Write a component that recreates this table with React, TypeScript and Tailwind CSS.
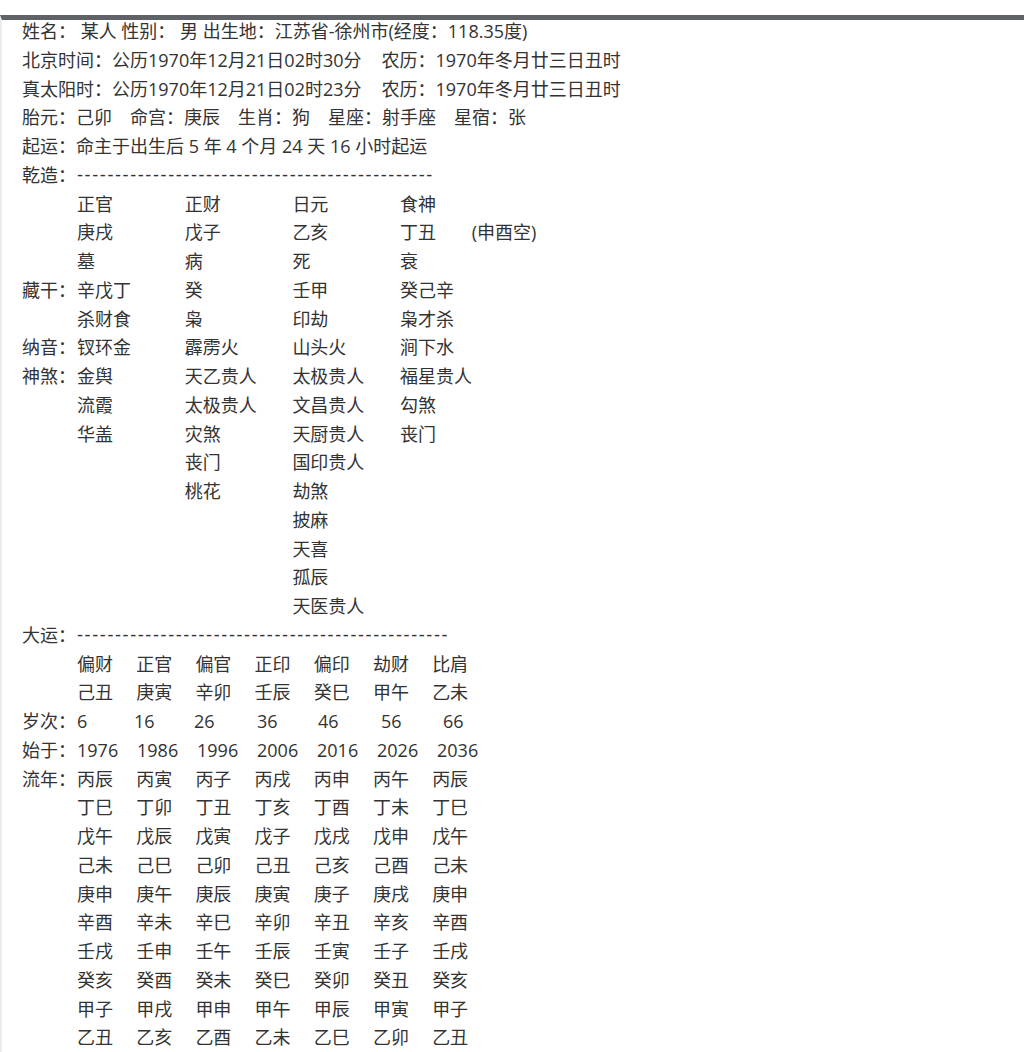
import React from "react";

const FONT = '"Open Sans", "Noto Sans CJK SC", sans-serif';

function Row({ label, children }: { label?: string; children?: React.ReactNode }) {
  return (
    <div className="flex h-[28.75px] items-center whitespace-nowrap">
      <div className="w-[55px] shrink-0">{label}</div>
      <div className="flex items-center">{children}</div>
    </div>
  );
}

function Cols({ items, w }: { items: string[]; w: string }) {
  return (
    <>
      {items.map((t, i) => (
        <div key={i} className={w}>
          {t}
        </div>
      ))}
    </>
  );
}

const Dashes = ({ n }: { n: number }) => (
  <span className="tracking-[1.6px]" style={{ fontFamily: '"Liberation Sans", sans-serif' }}>
    {"-".repeat(n)}
  </span>
);

export default function App() {
  const bazi: string[][] = [
    ["", "正官", "正财", "日元", "食神"],
    ["", "庚戌", "戊子", "乙亥", "丁丑"],
    ["", "墓", "病", "死", "衰"],
    ["藏干：", "辛戊丁", "癸", "壬甲", "癸己辛"],
    ["", "杀财食", "枭", "印劫", "枭才杀"],
    ["纳音：", "钗环金", "霹雳火", "山头火", "涧下水"],
    ["神煞：", "金舆", "天乙贵人", "太极贵人", "福星贵人"],
    ["", "流霞", "太极贵人", "文昌贵人", "勾煞"],
    ["", "华盖", "灾煞", "天厨贵人", "丧门"],
    ["", "", "丧门", "国印贵人", ""],
    ["", "", "桃花", "劫煞", ""],
    ["", "", "", "披麻", ""],
    ["", "", "", "天喜", ""],
    ["", "", "", "孤辰", ""],
    ["", "", "", "天医贵人", ""],
  ];
  const liunian: string[][] = [
    ["丙辰", "丙寅", "丙子", "丙戌", "丙申", "丙午", "丙辰"],
    ["丁巳", "丁卯", "丁丑", "丁亥", "丁酉", "丁未", "丁巳"],
    ["戊午", "戊辰", "戊寅", "戊子", "戊戌", "戊申", "戊午"],
    ["己未", "己巳", "己卯", "己丑", "己亥", "己酉", "己未"],
    ["庚申", "庚午", "庚辰", "庚寅", "庚子", "庚戌", "庚申"],
    ["辛酉", "辛未", "辛巳", "辛卯", "辛丑", "辛亥", "辛酉"],
    ["壬戌", "壬申", "壬午", "壬辰", "壬寅", "壬子", "壬戌"],
    ["癸亥", "癸酉", "癸未", "癸巳", "癸卯", "癸丑", "癸亥"],
    ["甲子", "甲戌", "甲申", "甲午", "甲辰", "甲寅", "甲子"],
    ["乙丑", "乙亥", "乙酉", "乙未", "乙巳", "乙卯", "乙丑"],
  ];
  const suici = ["6", "16", "26", "36", "46", "56", "66"];
  const suiciW = ["w-[57px]", "w-[60px]", "w-[63px]", "w-[61px]", "w-[63px]", "w-[62px]", "w-[40px]"];
  const shiyu = ["1976", "1986", "1996", "2006", "2016", "2026", "2036"];

  return (
    <div className="min-h-[1052px] bg-white pt-[15px]">
      <div
        className="border-l-2 border-t-[5px] border-l-[#ececec] border-t-[#5f6368] min-h-[1037px] pl-[20px] text-[18px] leading-[28.75px] text-[#333333]"
        style={{ fontFamily: FONT }}
      >
        <div className="-mt-[3px]">
          <div className="h-[28.75px] whitespace-nowrap">
            姓名： 某人 性别： 男 出生地：江苏省-徐州市(经度：118.35度)
          </div>
          <div className="h-[28.75px] whitespace-nowrap">
            北京时间：公历1970年12月21日02时30分<span className="ml-[20px]">农历：1970年冬月廿三日丑时</span>
          </div>
          <div className="h-[28.75px] whitespace-nowrap">
            真太阳时：公历1970年12月21日02时23分<span className="ml-[20px]">农历：1970年冬月廿三日丑时</span>
          </div>
          <div className="h-[28.75px] whitespace-nowrap">
            胎元：己卯　命宫：庚辰　生肖：狗　星座：射手座　星宿：张
          </div>
          <div className="h-[28.75px] whitespace-nowrap">
            起运：命主于出生后 5 年 4 个月 24 天 16 小时起运
          </div>
          <Row label="乾造：">
            <Dashes n={47} />
          </Row>
          {bazi.map((r, i) => (
            <Row key={i} label={r[0]}>
              <Cols items={r.slice(1)} w="w-[107.7px]" />
              {i === 1 && <div className="-ml-[36px]">(申酉空)</div>}
            </Row>
          ))}
          <Row label="大运：">
            <Dashes n={49} />
          </Row>
          <Row>
            <Cols items={["偏财", "正官", "偏官", "正印", "偏印", "劫财", "比肩"]} w="w-[59.2px]" />
          </Row>
          <Row>
            <Cols items={["己丑", "庚寅", "辛卯", "壬辰", "癸巳", "甲午", "乙未"]} w="w-[59.2px]" />
          </Row>
          <Row label="岁次：">
            {suici.map((t, i) => (
              <div key={i} className={suiciW[i]}>
                {t}
              </div>
            ))}
          </Row>
          <Row label="始于：">
            <Cols items={shiyu} w="w-[60px]" />
          </Row>
          {liunian.map((r, i) => (
            <Row key={i} label={i === 0 ? "流年：" : ""}>
              <Cols items={r} w="w-[59.2px]" />
            </Row>
          ))}
        </div>
      </div>
    </div>
  );
}
